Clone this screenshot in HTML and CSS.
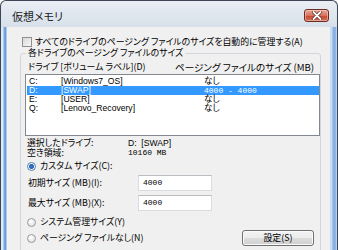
FILE: index.html
```html
<!DOCTYPE html>
<html lang="ja">
<head>
<meta charset="utf-8">
<title>仮想メモリ</title>
<link rel="stylesheet" href="styles.css">
</head>
<body>
<div class="window">
  <div class="titlebar">
    <span class="title">仮想メモリ</span>
    <div class="close">
      <svg width="12" height="9" viewBox="0 0 12 9">
        <path d="M2.5 1 L9.5 8 M9.5 1 L2.5 8" stroke="#5a2a22" stroke-width="3.2" stroke-linecap="round"/>
        <path d="M2.5 1 L9.5 8 M9.5 1 L2.5 8" stroke="#ffffff" stroke-width="1.8" stroke-linecap="round"/>
      </svg>
    </div>
  </div>
  <div class="frame">
    <div class="client">
      <div class="check"><span class="cb"></span><span>すべてのドライブのページング ファイルのサイズを自動的に管理する(A)</span></div>
      <fieldset class="group">
        <legend>各ドライブのページング ファイルのサイズ</legend>
        <div class="head"><span>ドライブ [ボリューム ラベル](D)</span><span>ページング ファイルのサイズ (MB)</span></div>
        <div class="list">
          <div class="row"><span>C:</span><span>[Windows7_OS]</span><span>なし</span></div>
          <div class="row sel"><span>D:</span><span>[SWAP]</span><span class="mono">4000 - 4000</span></div>
          <div class="row"><span>E:</span><span>[USER]</span><span>なし</span></div>
          <div class="row"><span>Q:</span><span>[Lenovo_Recovery]</span><span>なし</span></div>
        </div>
        <div class="info">
          <span>選択したドライブ:</span><span class="val">D:&nbsp; [SWAP]</span>
          <span>空き領域:</span><span class="mono">10160 MB</span>
        </div>
        <div class="radio r-custom"><span class="rb on"></span><span>カスタム サイズ(C):</span></div>
        <div class="field f1"><span>初期サイズ (MB)(I):</span><span class="input">4000</span></div>
        <div class="field f2"><span>最大サイズ (MB)(X):</span><span class="input">4000</span></div>
        <div class="radio r-sys"><span class="rb"></span><span>システム管理サイズ(Y)</span></div>
        <div class="last">
          <div class="radio"><span class="rb"></span><span>ページング ファイルなし(N)</span></div>
          <span class="button">設定(S)</span>
        </div>
      </fieldset>
    </div>
  </div>
</div>
</body>
</html>
```
FILE: styles.css
```css
html, body {
  margin: 0;
  padding: 0;
}
body {
  width: 338px;
  height: 250px;
  overflow: hidden;
  background: #ffffff;
  font-family: "Noto Sans CJK JP", "Liberation Sans", sans-serif;
  font-feature-settings: "palt";
  color: #000;
}
.window {
  width: 338px;
  height: 250px;
  box-sizing: border-box;
  border: 1px solid #3c4654;
  border-bottom: none;
  border-radius: 6px 6px 0 0;
  background: linear-gradient(#e9eef4, #d6dfe9 27px);
  display: flex;
  flex-direction: column;
  overflow: hidden;
}
.titlebar {
  height: 26px;
  flex: none;
  display: flex;
  justify-content: space-between;
  align-items: flex-start;
  padding: 0 8px 0 11px;
}
.title {
  font-size: 11px;
  line-height: 12px;
  margin-top: 9px;
  color: #1b1b1b;
}
.close {
  margin-top: 8px;
  width: 25px;
  height: 13px;
  box-sizing: border-box;
  border: 1px solid #6d2c22;
  border-radius: 3px;
  background: linear-gradient(#eaa897, #d7735d 50%, #c44a33 51%, #d66d52);
  box-shadow: inset 0 0 0 1px rgba(255, 220, 210, 0.5);
  display: flex;
  align-items: center;
  justify-content: center;
}
.frame {
  flex: 1;
  display: flex;
  padding: 0 7px;
  background:
    linear-gradient(to right, #dce8f5 0, #dce8f5 2px, #7ea8db 3px, #6b9ad5 5px, #eef4fb 6px, #eef4fb 7px, transparent 7px),
    linear-gradient(to left, #e4eef9 0, #8db5e5 1px, #86b0e3 4px, #c9dcf1 5px, #c9dcf1 7px, transparent 7px),
    #d6dfe9;
}
.client {
  flex: 1;
  background: #f0f0f0;
  padding: 10px 0 0 12px;
  font-size: 8.9px;
  line-height: 10px;
}
.check {
  display: flex;
  align-items: center;
  gap: 3px;
  height: 10px;
  margin-left: 2px;
  white-space: nowrap;
}
.cb {
  width: 10px;
  height: 10px;
  box-sizing: border-box;
  border: 1px solid #8e8f8f;
  background: linear-gradient(135deg, #d8d8d8, #f7f7f7);
  flex: none;
}
.group {
  margin: 0;
  width: 301px;
  box-sizing: border-box;
  border: 1px solid #d0d6db;
  border-radius: 3px;
  padding: 0 0 20px 4px;
  min-width: 0;
}
.group legend {
  padding: 0 2px;
  margin-left: 1px;
  line-height: 12px;
}
.head {
  display: grid;
  grid-template-columns: 147px 1fr;
  padding-left: 3px;
  margin-top: 2px;
  height: 12px;
  line-height: 12px;
  white-space: nowrap;
}
.head span:last-child {
  font-size: 9.6px;
}
.list {
  margin-top: 1px;
  width: 295px;
  height: 62px;
  box-sizing: border-box;
  border: 1px solid #828790;
  background: #ffffff;
  padding: 2px 0 0 1px;
}
.row {
  display: grid;
  grid-template-columns: 32px 143px 1fr;
  padding-left: 2px;
  height: 9px;
  line-height: 9px;
  font-family: "Liberation Sans", "Noto Sans CJK JP", sans-serif;
  font-size: 8.6px;
  white-space: nowrap;
}
.row.sel {
  background: #3399ff;
  color: #ffffff;
}
.mono {
  font-family: "Liberation Mono", "Noto Sans CJK JP", monospace;
  font-size: 8px;
}
.info {
  display: grid;
  grid-template-columns: 101px 1fr;
  padding-left: 2px;
  margin-top: 2px;
  line-height: 10px;
}
.val {
  font-family: "Liberation Sans", sans-serif;
  font-size: 8.6px;
}
.radio {
  display: flex;
  align-items: center;
  gap: 4px;
  height: 10px;
  margin-left: 2px;
  white-space: nowrap;
}
.r-custom { margin-top: 3px; }
.r-sys { margin-top: 6px; }
.rb {
  width: 9px;
  height: 9px;
  box-sizing: border-box;
  border-radius: 50%;
  border: 1px solid #9a9a9a;
  background: radial-gradient(circle at 40% 35%, #ffffff, #d8d8d8);
  flex: none;
}
.rb.on {
  border-color: #5a7ea8;
  background: radial-gradient(circle, #3a7fd0 0, #1c5fb4 2px, #ffffff 3px, #d6e4f2 4px);
}
.field {
  display: grid;
  grid-template-columns: 110px 74px;
  align-items: center;
  padding-left: 3px;
  height: 16px;
}
.f1 { margin-top: 4px; }
.f2 { margin-top: 4px; }
.input {
  height: 16px;
  box-sizing: border-box;
  border: 1px solid #d9dde2;
  border-top-color: #b9bdc2;
  background: #ffffff;
  padding-left: 4px;
  line-height: 14px;
  font-family: "Liberation Mono", monospace;
  font-size: 8px;
}
.last {
  display: flex;
  justify-content: space-between;
  align-items: center;
  height: 16px;
  margin-top: 3px;
  margin-right: 6px;
}
.button {
  width: 72px;
  height: 16px;
  box-sizing: border-box;
  border: 1px solid #707070;
  border-radius: 3px;
  background: linear-gradient(#f3f3f3, #ebebeb 50%, #dddddd 51%, #cfcfcf);
  box-shadow: inset 0 0 0 1px #fbfbfb;
  display: flex;
  align-items: center;
  justify-content: center;
  line-height: 10px;
}
```
